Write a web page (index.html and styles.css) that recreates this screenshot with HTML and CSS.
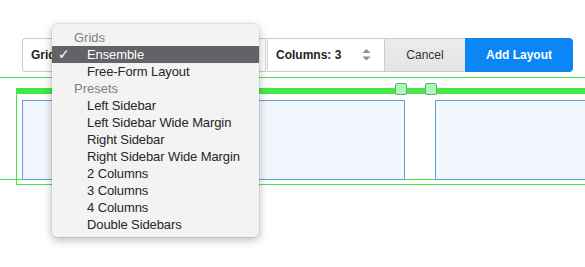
FILE: index.html
```html
<!DOCTYPE html>
<html>
<head>
<meta charset="utf-8">
<link rel="stylesheet" href="styles.css">
</head>
<body>
<div class="toolbar">
  <div class="seg seg-grid"><span class="label">Grid</span></div>
  <div class="seg seg-cols">
    <span class="label">Columns: 3</span>
    <svg class="stepper" width="9" height="12" viewBox="0 0 9 12"><path d="M4.5 0 L8.5 4 L0.5 4 Z" fill="#8c8c8c"/><path d="M0.5 7.5 L8.5 7.5 L4.5 11.5 Z" fill="#8c8c8c"/></svg>
  </div>
  <button class="btn cancel">Cancel</button>
  <button class="btn add">Add Layout</button>
</div>
<div class="canvas">
  <div class="frame">
    <div class="col"></div>
    <div class="col"></div>
    <div class="col"></div>
  </div>
  <span class="handle h1"></span>
  <span class="handle h2"></span>
</div>
<div class="menu">
  <div class="mhead">Grids</div>
  <div class="mitem sel"><span class="check">✓</span>Ensemble</div>
  <div class="mitem">Free-Form Layout</div>
  <div class="mhead">Presets</div>
  <div class="mitem">Left Sidebar</div>
  <div class="mitem">Left Sidebar Wide Margin</div>
  <div class="mitem">Right Sidebar</div>
  <div class="mitem">Right Sidebar Wide Margin</div>
  <div class="mitem">2 Columns</div>
  <div class="mitem">3 Columns</div>
  <div class="mitem">4 Columns</div>
  <div class="mitem">Double Sidebars</div>
</div>
</body>
</html>
```
FILE: styles.css
```css
html, body {
  margin: 0;
  padding: 0;
  overflow: hidden;
  background: #ffffff;
  font-family: "Liberation Sans", Arial, sans-serif;
}
body {
  position: relative;
  width: 585px;
  height: 267px;
}
.toolbar {
  display: flex;
  margin: 38px 0 0 22px;
  height: 34px;
}
.seg {
  display: flex;
  align-items: center;
  box-sizing: border-box;
  height: 34px;
  border: 1px solid #cacaca;
  background: #ffffff;
  font-size: 12px;
  font-weight: bold;
  color: #222;
}
.seg-grid {
  width: 246px;
  padding-left: 8px;
  border-radius: 4px 0 0 4px;
  border-right: 3px double #d4d4d4;
}
.seg-cols {
  width: 117px;
  padding-left: 8px;
  border-left: none;
  justify-content: space-between;
  padding-right: 13px;
}
.stepper { display: block; }
.btn {
  box-sizing: border-box;
  height: 34px;
  margin: 0;
  font-family: "Liberation Sans", Arial, sans-serif;
  font-size: 12px;
  cursor: pointer;
}
.cancel {
  width: 80px;
  border: 1px solid #cacaca;
  border-left: none;
  border-right: none;
  background: linear-gradient(#ececec, #e4e4e4);
  color: #333;
}
.add {
  width: 108px;
  border: none;
  border-radius: 0 4px 4px 0;
  background: #0a86f7;
  color: #ffffff;
  font-weight: bold;
}
.canvas {
  position: relative;
  padding-top: 11px;
  margin-top: 5px;
}
.canvas::before {
  content: "";
  position: absolute;
  left: 0;
  right: 0;
  top: 0;
  height: 101px;
  border-top: 1px solid #46e646;
  border-bottom: 1px solid #46e646;
}
.frame {
  position: relative;
  display: flex;
  gap: 30px;
  overflow: hidden;
  margin-left: 16px;
  padding: 6px 0 4px 5px;
  border-top: 6px solid #44e744;
  border-left: 1px solid #44e744;
  border-bottom: 1px solid #44e744;
}
.col {
  flex: none;
  box-sizing: border-box;
  width: 383px;
  height: 80px;
  border: 1px solid #5ba2d9;
  background: #f2f7fe;
}
.handle {
  position: absolute;
  top: 6px;
  box-sizing: border-box;
  width: 12px;
  height: 12px;
  border: 1px solid #5aa9a0;
  border-radius: 2px;
  background: #b2f7aa;
}
.h1 { left: 395px; }
.h2 { left: 425px; }
.menu {
  position: absolute;
  left: 52px;
  top: 24px;
  width: 207px;
  padding: 5px 0 4px;
  background: #f3f3f3;
  border-radius: 5px;
  box-shadow: 0 3px 10px rgba(0, 0, 0, 0.28), 0 0 0 0.5px rgba(0, 0, 0, 0.12);
  font-size: 13px;
  line-height: 17px;
}
.mhead {
  height: 17px;
  padding-left: 22px;
  color: #808080;
}
.mitem {
  position: relative;
  height: 17px;
  padding-left: 35px;
  color: #262626;
  letter-spacing: -0.1px;
}
.mitem.sel {
  background: #636267;
  color: #ffffff;
}
.check {
  position: absolute;
  left: 6px;
  top: 0;
  font-family: "DejaVu Sans", sans-serif;
  font-size: 14px;
  font-weight: bold;
}
```
